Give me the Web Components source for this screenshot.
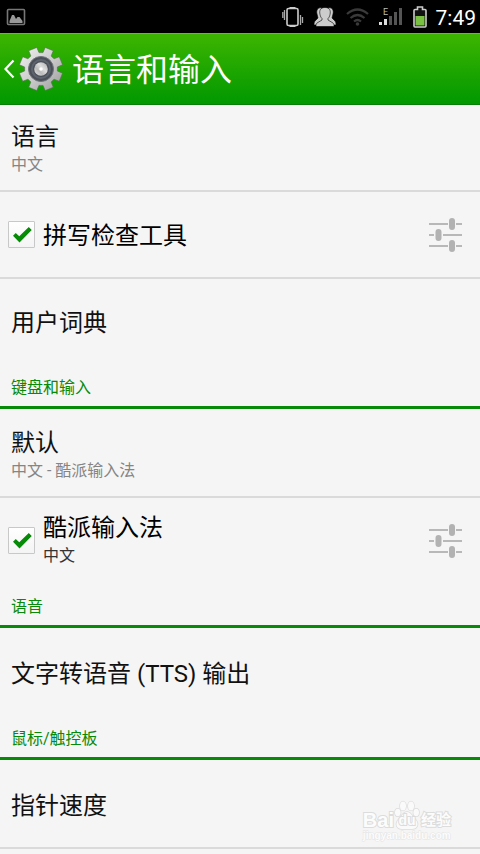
<!DOCTYPE html>
<html lang="zh-CN">
<head>
<meta charset="utf-8">
<meta name="viewport" content="width=device-width, initial-scale=1">
<title>语言和输入</title>
<style>
	body {
		margin: 0;
		background: #f5f5f5;
		color: #111;
		font-family: Roboto, "Noto Sans CJK SC", sans-serif;
	}
</style>
</head>
<body>
<settings-screen></settings-screen>

<script>
(function() {
	function makeTemplate(html) {
		const template = document.createElement("template");
		template.innerHTML = html;
		return template;
	}

	class BaseElement extends HTMLElement {
		constructor() {
			super();
			this._shadowRoot = this.attachShadow({mode: "open"});
			this._shadowRoot.appendChild(this.constructor.template.content.cloneNode(true));
		}
	}

	class StatusBar extends BaseElement {}
	StatusBar.template = makeTemplate(`
		<style>
			:host {
				display: flex;
				align-items: center;
				height: 33px;
				padding: 0 4px 0 6px;
				background: #000;
				color: #fff;
			}
			svg { display: block; }
			.icons {
				display: flex;
				align-items: center;
				gap: 10px;
				margin-left: auto;
				margin-right: 9px;
			}
			time {
				padding-top: 2px;
				font-size: 21px;
				line-height: 30px;
			}
		</style>
		<svg width="20" height="18" viewBox="0 0 20 18" aria-hidden="true">
			<rect x="1.5" y="1.5" width="17" height="15" rx="1" fill="none" stroke="#777" stroke-width="1.6"/>
			<path d="M3.500 15v-2l2.500-6h2l2 4 1.500-2h2l3 4v2z" fill="#999"/>
		</svg>
		<div class="icons">
			<svg width="22" height="22" viewBox="0 0 22 22" aria-hidden="true">
				<rect x="5" y="2.500" width="11" height="17" rx="1.500" fill="none" stroke="#ccc" stroke-width="1.600"/>
				<path d="M7.500 2h6M7.500 20h6" stroke="#ccc" stroke-width="2"/>
				<path d="M2.500 4v10M.8 6v6M18.500 9v10M20.500 11v6" stroke="#aaa" stroke-width="1.300"/>
			</svg>
			<svg width="22" height="22" viewBox="0 0 22 22" aria-hidden="true">
				<g fill="#ccc" stroke="#000" stroke-width=".6">
					<path d="M14 2c4-1 6 2 5 6l-1 4 3 3c1 1 1 3 1 4H11z"/>
					<path d="M8 2C4 1 2 4 3 8l1 4-3 3c-1 1-1 3-1 4h11z"/>
					<path d="M11 1.500c4.500 0 6 3 5 7-.4 2-1 3-2 4v1.500l5 3c1 1 1 2 1 3.500H2c0-1.500 0-2.500 1-3.500l5-3v-1.500c-1-1-1.600-2-2-4-1-4 .5-7 5-7z"/>
				</g>
			</svg>
			<svg width="23" height="20" viewBox="0 0 23 20" aria-hidden="true">
				<g fill="none" stroke="#3a3a3a" stroke-width="2.200">
					<path d="M1 7q10.500-9 21 0M4.500 11q7-6 14 0M8 14.500q3.500-3 7 0"/>
				</g>
				<circle cx="11.500" cy="17" r="1.800" fill="#3a3a3a"/>
			</svg>
			<svg width="24" height="20" viewBox="0 0 24 20" aria-hidden="true">
				<text x="4" y="8" font-size="9" fill="#bbb">E</text>
				<path d="M0 15h3v3H0zM5 12h3v6H5z" fill="#ddd"/>
				<path d="M10 9h3v9h-3zM15 5h3v13h-3zM20 1h3v17h-3z" fill="#555"/>
			</svg>
			<svg width="14" height="22" viewBox="0 0 14 22" aria-hidden="true">
				<path d="M4.500 1h5v2.500h2.500q1 0 1 1V20q0 1-1 1H2q-1 0-1-1V4.500q0-1 1-1h2.500z" fill="#111" stroke="#ccc" stroke-width="1.600"/>
				<path d="M2.500 10h9v9.500h-9z" fill="#7ac143"/>
			</svg>
		</div>
		<time>7:49</time>
	`);

	class TitleBar extends BaseElement {
		connectedCallback() {
			// eight teeth, first one half a step away from the top
			const points = [];
			for (let i = 0; i < 8; i++) {
				const mid = (i + 0.5) * Math.PI / 4;
				[[-0.27, 16.5], [-0.2, 22], [0.2, 22], [0.27, 16.5]].forEach(([turn, r]) => {
					points.push((Math.cos(mid + turn) * r).toFixed(2) + " " + (Math.sin(mid + turn) * r).toFixed(2));
				});
			}
			this._shadowRoot.getElementById("gear").setAttribute("d", "M" + points.join("L") + "Z");
		}
	}
	TitleBar.template = makeTemplate(`
		<style>
			:host {
				display: flex;
				align-items: center;
				box-sizing: border-box;
				height: 72px;
				border-top: 1px solid #5fc12c;
				border-bottom: 1px solid #078007;
				background: linear-gradient(#3db500, #009800);
				color: #fff;
			}
			button {
				display: flex;
				align-items: center;
				gap: 3px;
				padding: 0 0 0 4px;
				border: 0;
				background: none;
			}
			svg { display: block; }
			h1 {
				margin: 0 0 0 8px;
				padding-top: 2px;
				font-size: 32px;
				font-weight: 400;
				line-height: 40px;
			}
		</style>
		<button type="button" aria-label="返回">
			<svg width="11" height="20" viewBox="0 0 11 20"><path d="M9.500 1.500L1.500 10l8 8.500" fill="none" stroke="#fff" stroke-width="2.200"/></svg>
			<svg width="46" height="46" viewBox="-23 -23 46 46">
				<defs>
					<linearGradient id="body" x1="0" y1="0" x2="1" y2="1">
						<stop offset="0" stop-color="#f2f2f2"/>
						<stop offset=".55" stop-color="#c8c8c8"/>
						<stop offset="1" stop-color="#999"/>
					</linearGradient>
					<linearGradient id="hub" x1="0" y1="1" x2="1" y2="0">
						<stop offset="0" stop-color="#e8e8e8"/>
						<stop offset=".35" stop-color="#bbb"/>
						<stop offset=".6" stop-color="#ddd"/>
						<stop offset="1" stop-color="#aaa"/>
					</linearGradient>
				</defs>
				<path id="gear" fill="url(#body)" stroke="#557050" stroke-width=".6" stroke-linejoin="round"/>
				<circle r="12.500" fill="#4a4f58" stroke="#70757c"/>
				<circle r="9" fill="none" stroke="#5e646e" stroke-width="2"/>
				<circle r="6.800" fill="url(#hub)"/>
				<circle r="1.800" fill="#fff"/>
			</svg>
		</button>
		<h1><slot></slot></h1>
	`);

	class SettingRow extends BaseElement {}
	SettingRow.template = makeTemplate(`
		<style>
			:host {
				display: block;
				border-bottom: 2px solid #dadada;
			}
			:host([last]) { border-color: transparent; }
			button {
				display: flex;
				flex-direction: column;
				justify-content: center;
				box-sizing: border-box;
				width: 100%;
				min-height: 85px;
				padding: 2px 11px 0;
				border: 0;
				background: none;
				color: inherit;
				font: inherit;
				font-size: 24px;
				line-height: 32px;
				text-align: left;
			}
			:host([detailed]) button { padding-top: 3px; }
			::slotted([slot="summary"]) {
				color: #858585;
				font-size: 16px;
				line-height: 24px;
			}
		</style>
		<button type="button">
			<span><slot></slot></span>
			<slot name="summary"></slot>
		</button>
	`);

	class CheckRow extends BaseElement {
		connectedCallback() {
			this._shadowRoot.getElementById("check").checked = this.hasAttribute("checked");
		}
	}
	CheckRow.template = makeTemplate(`
		<style>
			:host {
				display: flex;
				align-items: center;
				min-height: 85px;
				padding: 0 18px 0 8px;
				border-bottom: 2px solid #dadada;
			}
			:host([last]) { border-color: transparent; }
			input {
				flex: none;
				appearance: none;
				box-sizing: border-box;
				width: 27px;
				height: 27px;
				margin: 0 8px 0 0;
				border: 1px solid #c8c8c8;
				border-radius: 1px;
				background: linear-gradient(#fff, #f4f4f4);
			}
			input:checked::before {
				content: "";
				display: block;
				height: 100%;
				background: #078a07;
				clip-path: polygon(16% 55%, 27% 44%, 41% 57%, 79% 20%, 91% 32%, 42% 82%);
			}
			label {
				display: flex;
				flex: 1;
				flex-direction: column;
				padding-top: 2px;
				color: #000;
				font-size: 24px;
				line-height: 32px;
			}
			:host([detailed]) label { padding: 0 0 2px; }
			::slotted([slot="summary"]) {
				color: #333;
				font-size: 16px;
				line-height: 24px;
			}
			button {
				padding: 0;
				border: 0;
				background: none;
			}
			svg { display: block; }
		</style>
		<input type="checkbox" id="check">
		<label for="check">
			<span><slot></slot></span>
			<slot name="summary"></slot>
		</label>
		<button type="button" aria-label="设置">
			<svg width="33" height="35" viewBox="0 0 33 35">
				<path d="M0 7h19M27 7h6M0 18h5M14 18h19M0 29h19M27 29h6" stroke="#b8b8b8" stroke-width="2"/>
				<path d="M23 4v6M9.500 15v6M23 26v6" stroke="#b2b2b2" stroke-width="6" stroke-linecap="round"/>
			</svg>
		</button>
	`);

	class SettingCategory extends BaseElement {}
	SettingCategory.template = makeTemplate(`
		<style>
			:host {
				display: block;
				margin-bottom: 2px;
				border-bottom: 3px solid #078a07;
			}
			h2 {
				margin: 0;
				padding: 10px 11px 6px;
				color: #078a07;
				font-size: 16px;
				font-weight: 400;
				line-height: 24px;
			}
		</style>
		<h2><slot></slot></h2>
	`);

	class BaiduMark extends BaseElement {}
	BaiduMark.template = makeTemplate(`
		<style>
			:host {
				display: block;
				color: #fcfcfc;
				font-family: "Liberation Sans", "Noto Sans CJK SC", sans-serif;
				font-weight: 700;
				-webkit-text-stroke: 2px #dcdcdc;
				paint-order: stroke fill;
			}
			.logo {
				display: flex;
				align-items: flex-end;
				font-size: 20px;
				line-height: 20px;
			}
			.paw {
				display: grid;
				place-items: end center;
				font-size: 14px;
				line-height: 20px;
			}
			.paw > * { grid-area: 1 / 1; }
			.cjk {
				margin-left: 1px;
				font-size: 15px;
			}
			.site {
				font-size: 10px;
				line-height: 12px;
				-webkit-text-stroke: 1px #e4e4e4;
			}
			svg { display: block; }
		</style>
		<div class="logo">
			<span>Bai</span>
			<span class="paw">
				<svg width="26" height="30" viewBox="0 0 26 30" aria-hidden="true">
					<g fill="#fafafa" stroke="#dcdcdc" stroke-width="1.500">
						<ellipse cx="3.800" cy="12.500" rx="2.800" ry="3.800"/>
						<ellipse cx="9" cy="6" rx="3" ry="4.500"/>
						<ellipse cx="17" cy="6" rx="3" ry="4.500"/>
						<ellipse cx="22.200" cy="12.500" rx="2.800" ry="3.800"/>
						<path d="M13 12c4 0 5 4 8 7 5 5 2 10-3 10H8c-5 0-8-5-3-10 3-3 4-7 8-7z"/>
					</g>
				</svg>
				<span>du</span>
			</span>
			<span class="cjk">经验</span>
		</div>
		<div class="site">jingyan.baidu.com</div>
	`);

	class SettingsScreen extends BaseElement {}
	SettingsScreen.template = makeTemplate(`
		<style>
			:host {
				display: block;
				position: relative;
			}
			/* floats over the bottom rows */
			baidu-mark {
				position: absolute;
				right: 29px;
				bottom: 7px;
				pointer-events: none;
			}
		</style>
		<status-bar></status-bar>
		<title-bar>语言和输入</title-bar>
		<main>
			<setting-row detailed>语言<span slot="summary">中文</span></setting-row>
			<check-row checked>拼写检查工具</check-row>
			<setting-row last>用户词典</setting-row>
			<setting-category>键盘和输入</setting-category>
			<setting-row detailed>默认<span slot="summary">中文 - 酷派输入法</span></setting-row>
			<check-row checked detailed last>酷派输入法<span slot="summary">中文</span></check-row>
			<setting-category>语音</setting-category>
			<setting-row last>文字转语音 (TTS) 输出</setting-row>
			<setting-category>鼠标/触控板</setting-category>
			<setting-row>指针速度</setting-row>
		</main>
		<baidu-mark></baidu-mark>
	`);

	customElements.define("status-bar", StatusBar);
	customElements.define("title-bar", TitleBar);
	customElements.define("setting-row", SettingRow);
	customElements.define("check-row", CheckRow);
	customElements.define("setting-category", SettingCategory);
	customElements.define("baidu-mark", BaiduMark);
	customElements.define("settings-screen", SettingsScreen);
})();
</script>
</body>
</html>
